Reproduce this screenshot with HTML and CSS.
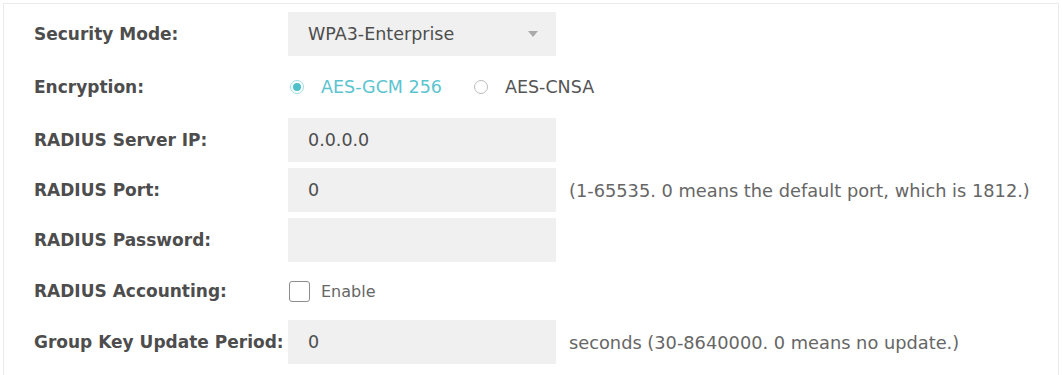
FILE: index.html
```html
<!DOCTYPE html>
<html lang="en">
<head>
<meta charset="utf-8">
<title>Wireless Security</title>
<link rel="stylesheet" href="styles.css">
</head>
<body>
<div class="panel">
  <div class="form">
    <div class="label r1">Security Mode:</div>
    <div class="field r1">
      <div class="select">
        <span>WPA3-Enterprise</span>
        <span class="arrow"></span>
      </div>
    </div>
    <div class="hint r1"></div>

    <div class="label r2">Encryption:</div>
    <div class="field r2 radios">
      <label class="radio checked"><span class="dot"></span><span>AES-GCM 256</span></label>
      <label class="radio"><span class="dot"></span><span>AES-CNSA</span></label>
    </div>
    <div class="hint r2"></div>

    <div class="label r3">RADIUS Server IP:</div>
    <div class="field r3"><div class="input">0.0.0.0</div></div>
    <div class="hint r3"></div>

    <div class="label r4">RADIUS Port:</div>
    <div class="field r4"><div class="input">0</div></div>
    <div class="hint r4">(1-65535. 0 means the default port, which is 1812.)</div>

    <div class="label r5">RADIUS Password:</div>
    <div class="field r5"><div class="input"></div></div>
    <div class="hint r5"></div>

    <div class="label r6">RADIUS Accounting:</div>
    <div class="field r6"><label class="check"><span class="box"></span><span>Enable</span></label></div>
    <div class="hint r6"></div>

    <div class="label r7">Group Key Update Period:</div>
    <div class="field r7"><div class="input">0</div></div>
    <div class="hint r7">seconds (30-8640000. 0 means no update.)</div>
  </div>
</div>
</body>
</html>
```

FILE: styles.css
```css
html, body {
  margin: 0;
  padding: 0;
  background: #ffffff;
}
body {
  font-family: "DejaVu Sans", Verdana, sans-serif;
  color: #555555;
  overflow: hidden;
}
.panel {
  margin: 3px 3px 0 3px;
  border: 1px solid #ebebeb;
  border-bottom: none;
  height: 372px;
  box-sizing: border-box;
  padding: 8px 0 0 30px;
}
.form {
  display: grid;
  grid-template-columns: 254px 268px auto;
  grid-template-rows: 44px 50px 44px 44px 44px 46px 44px;
  row-gap: 6px;
  align-items: center;
}
.label {
  font-weight: bold;
  font-size: 17px;
  color: #4d4d4d;
  white-space: nowrap;
}
.hint {
  font-size: 17.8px;
  color: #666666;
  padding-left: 13px;
  white-space: nowrap;
}
.field {
  height: 100%;
  display: flex;
  align-items: center;
  white-space: nowrap;
}
.select, .input {
  box-sizing: border-box;
  width: 268px;
  height: 44px;
  background: #f0f0f0;
  display: flex;
  align-items: center;
  padding-left: 20px;
  font-size: 17.5px;
  color: #4d4d4d;
}
.select {
  justify-content: space-between;
  padding-right: 18px;
}
.arrow {
  width: 0;
  height: 0;
  border-left: 5px solid transparent;
  border-right: 5px solid transparent;
  border-top: 6px solid #a9a9a9;
}
.radio {
  display: flex;
  align-items: center;
  font-size: 17.5px;
  color: #555555;
  margin-right: 26px;
  white-space: nowrap;
}
.radio .dot {
  box-sizing: border-box;
  width: 14px;
  height: 14px;
  border-radius: 50%;
  border: 1px solid #bdbdbd;
  margin: 0 17px 0 2px;
  position: relative;
  flex: none;
}
.radio.checked {
  color: #5bc4cf;
  margin-right: 30px;
}
.radio.checked .dot {
  border-color: #9fdce2;
  background: #ffffff;
}
.radio.checked .dot::after {
  content: "";
  position: absolute;
  left: 2px;
  top: 2px;
  width: 8px;
  height: 8px;
  border-radius: 50%;
  background: #4fbfca;
}
.check {
  display: flex;
  align-items: center;
  font-size: 16px;
  color: #666666;
}
.check .box {
  box-sizing: border-box;
  width: 21px;
  height: 21px;
  border: 1.5px solid #8c8c8c;
  border-radius: 3px;
  margin: 0 11px 0 1px;
  flex: none;
}
```
